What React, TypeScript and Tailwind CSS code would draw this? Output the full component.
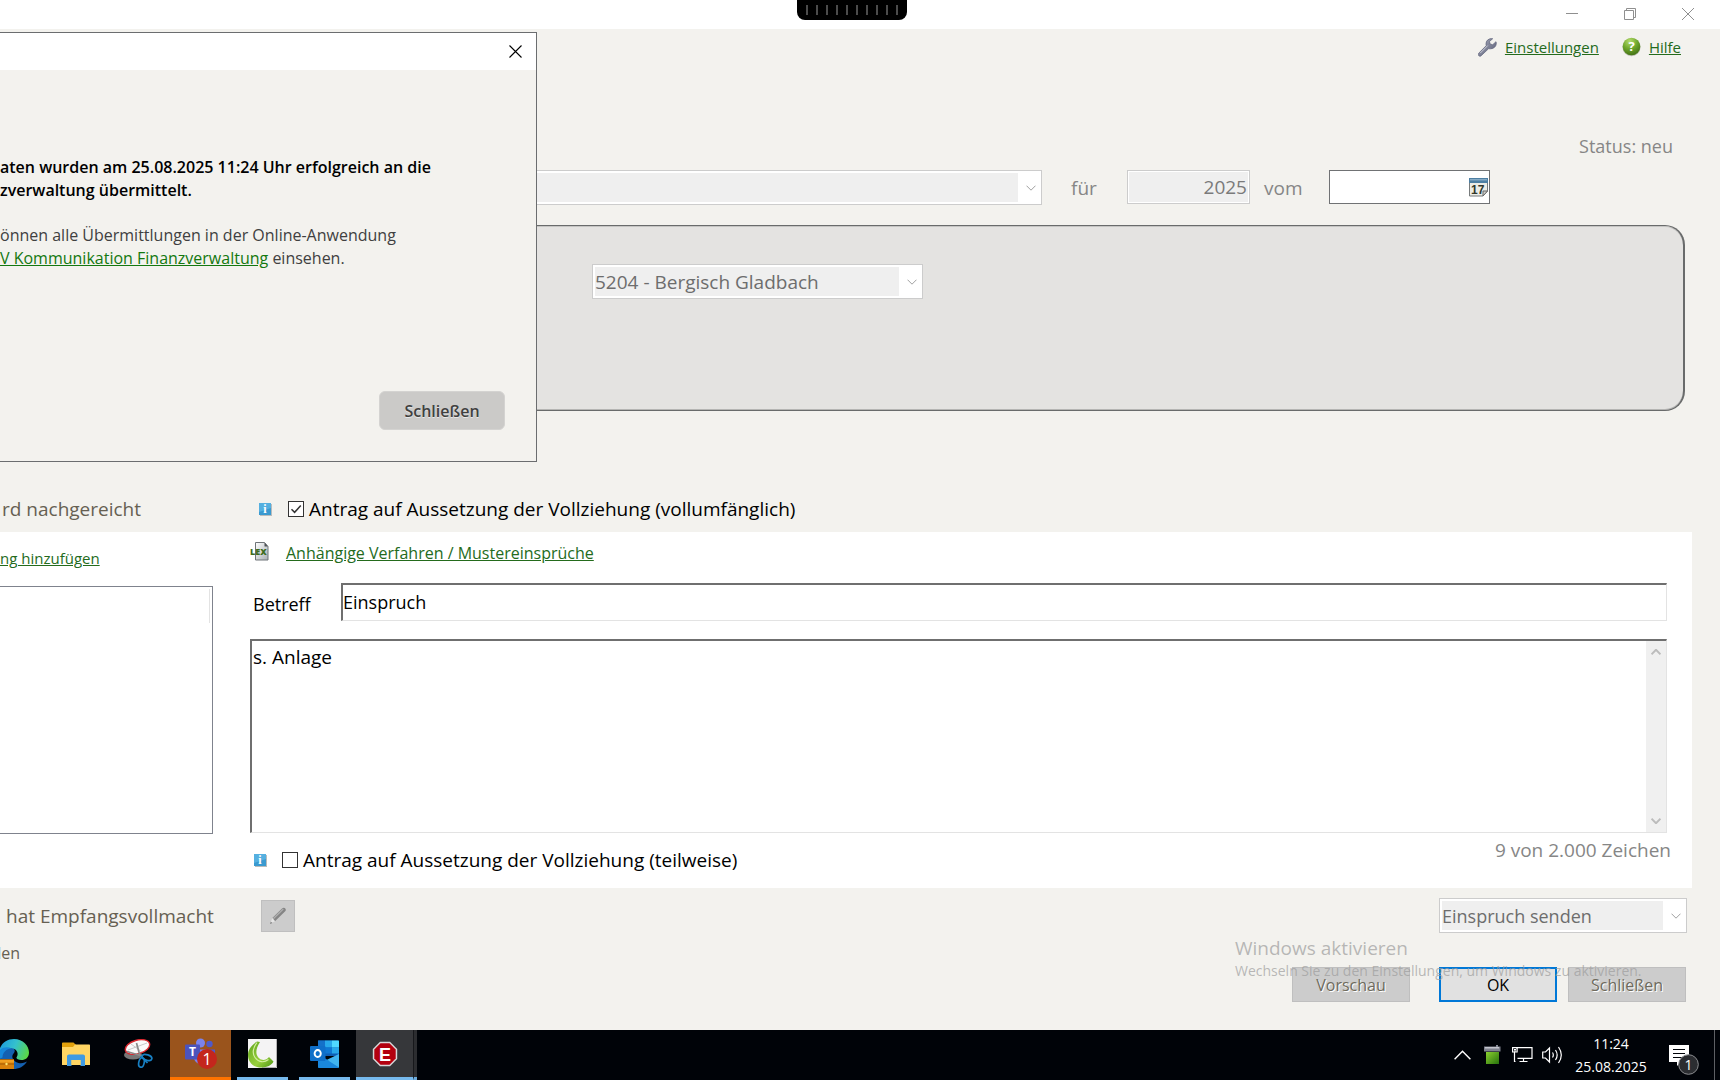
import { useState } from 'react';
import type { ReactNode } from 'react';

const Chevron = ({ className = '', up = false, width = 1 }: { className?: string; up?: boolean; width?: number }) => (
  <svg viewBox="0 0 10 6" className={`w-[10px] h-[6px] shrink-0 ${className}`} fill="none" stroke="currentColor" strokeWidth={width}>
    <path d={up ? 'M0.5 5.3 5 0.8 9.5 5.3' : 'M0.5 0.7 5 5.2 9.5 0.7'} />
  </svg>
);

const WrenchIcon = () => (
  <svg viewBox="0 0 19 19" className="w-[19px] h-[19px] shrink-0">
    <defs>
      <linearGradient id="wrench" x1="0" y1="0" x2="1" y2="1">
        <stop offset="0" stopColor="#a9adbd" />
        <stop offset="1" stopColor="#565a72" />
      </linearGradient>
    </defs>
    <path
      d="M13.500.6c-3 0-5.600 2.100-5.500 5.300 0 .7.1 1.200.300 1.700L.7 15.200c-.5.6-.6 1.900.200 2.600.7.7 1.700.5 2.300-.1l7.500-7.100c.6.200 1.300.3 2 .2 3.300-.1 5.700-2.500 5.600-5.800l-.3-1.300-3.300 3-2.600-.7-.6-2.500 3.200-2.800z"
      fill="url(#wrench)"
      stroke="#5d617a"
      strokeWidth=".7"
    />
    <path d="M9.800 7.500 2.300 15" stroke="#c9ccd8" strokeWidth="1" fill="none" />
  </svg>
);

const HelpIcon = () => (
  <svg viewBox="0 0 19 20" className="w-[19px] h-[20px] shrink-0">
    <defs>
      <radialGradient id="help" cx=".4" cy=".2" r=".85">
        <stop offset="0" stopColor="#b5dc6d" />
        <stop offset=".5" stopColor="#70a82c" />
        <stop offset="1" stopColor="#3f6d12" />
      </radialGradient>
    </defs>
    <circle cx="9.500" cy="10.200" r="9" fill="#8f9a83" opacity=".6" />
    <circle cx="9.500" cy="9.500" r="8.800" fill="url(#help)" />
    <text x="9.500" y="14.200" textAnchor="middle" fontSize="13" fontWeight="700" fill="#fff" fontFamily="Open Sans, sans-serif">?</text>
  </svg>
);

const CalendarIcon = () => (
  <svg viewBox="0 0 19 19" className="w-[19px] h-[19px]">
    <path d="M.5.5h18v12.500l-4.500 5H.5z" fill="#ecece6" stroke="#777b7c" />
    <path d="M0 0h19v5H0z" fill="#4d7fa3" />
    <path d="M1 1h17v1.500H1z" fill="#86abc5" />
    <path d="M18.500 13h-4.500v5z" fill="#cfcfcb" stroke="#666" />
    <text x="8.800" y="15.500" textAnchor="middle" fontSize="12" fontWeight="700" fill="#33382c" fontFamily="Liberation Sans, sans-serif">17</text>
  </svg>
);

const InfoIcon = () => (
  <svg viewBox="0 0 13 13" className="w-[13px] h-[13px] shrink-0">
    <path d="M1 1h12v12H1z" fill="#b9bcbc" />
    <path d="M0 0h12v12H0z" fill="#3a9ad0" />
    <path d="M0 0h12v5L0 9z" fill="#55b0e0" />
    <text x="6" y="10" textAnchor="middle" fontSize="12" fontWeight="700" fill="#fff" fontFamily="Liberation Serif, serif">i</text>
  </svg>
);

const LexIcon = () => (
  <svg viewBox="0 0 19 19" className="w-[19px] h-[19px] shrink-0">
    <defs>
      <linearGradient id="sheet" x1="0" y1="0" x2="1" y2="1">
        <stop offset="0" stopColor="#fff" />
        <stop offset="1" stopColor="#a9afb4" />
      </linearGradient>
    </defs>
    <path d="M5.500.5h9l3.500 4v13.500H5.500z" fill="url(#sheet)" stroke="#6f7478" />
    <path d="M14.500.5v4h3.500z" fill="#4f5357" />
    <text x="0" y="12.800" fontSize="9" fontWeight="800" fill="#3d6b1d" fontFamily="Open Sans, sans-serif">LEX</text>
  </svg>
);

const PencilIcon = () => (
  <svg viewBox="0 0 18 18" className="w-[18px] h-[18px]">
    <path d="M3.300 11 13.300 1.300c1-.9 2.300-.7 3 .1.700.8.700 2-.1 2.900L6 14.300z" fill="#858585" />
    <path d="M4.300 11.800 14.300 2" stroke="#b0b0b0" strokeWidth="1.200" />
    <path d="M3.300 11 6 14.300 1.500 16.300z" fill="#e6e6e6" />
    <path d="M1 17l.8-2.300 1.500 1.400z" fill="#777" />
  </svg>
);

const EdgeIcon = () => (
  <svg viewBox="0 0 30 30" className="w-[30px] h-[30px] -ml-px">
    <defs>
      <linearGradient id="edgeTop" x1="0" y1=".3" x2="1" y2=".6">
        <stop offset="0" stopColor="#1c9de0" />
        <stop offset=".5" stopColor="#35c1cc" />
        <stop offset="1" stopColor="#5ad845" />
      </linearGradient>
    </defs>
    <path d="M0 19C0 9 6 6 12 8c5 1.500 4 5 2.500 6.500-3 3.500 0 8 5 9.500 4 1 7-.8 8.500-1.500C25 27.500 20 30 14 30 6 30 0 26 0 19z" fill="#1460b0" />
    <path d="M0 12C2 4 8 0 15 0c9 0 15 6.500 15 13.500 0 5-3.500 7.500-7.500 7.500-3.500 0-5.500-1.300-5-2.500 2.500-3.500 1-9-6-9.500C7 8.700 3 10 0 14z" fill="url(#edgeTop)" />
    <path d="M0 12c3-4 9-4.500 12.500-2.500-5 0-9 4-9 9L0 20z" fill="#1687da" />
    <path d="M0 20h15v10H0z" fill="#d9820c" />
    <path d="M0 20h15v3.500H0z" fill="#f0a021" />
    <path d="M0 20.500h15M0 25h15" stroke="#8a4c05" strokeWidth=".7" />
    <circle cx="7.500" cy="25" r="1.200" fill="#ffe36b" />
  </svg>
);

const FolderIcon = () => (
  <svg viewBox="0 0 28 24" className="w-[28px] h-[24px]">
    <path d="M0 1.500C0 .7.500.5 1 .5h10.500L14 3v5H0z" fill="#e2a10c" />
    <path d="M0 5h11l2-2.500h14c.6 0 1 .4 1 1V23H0z" fill="#ffd563" />
    <path d="M5 24v-9.500c0-1.300.8-2 2-2h14c1.200 0 2 .7 2 2V24h-4.500v-6h-9v6z" fill="#3f9ae2" />
    <path d="M9.500 18h9v5h-9z" fill="#ffd563" />
  </svg>
);

const SnipIcon = () => (
  <svg viewBox="0 0 29 29" className="w-[29px] h-[29px]" fill="none">
    <ellipse cx="9" cy="16" rx="9" ry="4.500" fill="#777" />
    <ellipse cx="13.500" cy="8" rx="12.500" ry="6.800" transform="rotate(-16 13.500 8)" fill="#fafafa" stroke="#d9282f" strokeWidth="1.400" />
    <path d="M4 11l19-7M7 5l11 8" stroke="#c9c9c9" />
    <path d="M12.500 4 16 17M3 12.500 18 17" stroke="#8b8b8b" strokeWidth="1.700" />
    <ellipse cx="23" cy="18.500" rx="5" ry="2.700" transform="rotate(18 23 18.500)" stroke="#1780c4" strokeWidth="1.700" />
    <ellipse cx="17.500" cy="23.500" rx="2.700" ry="4.800" transform="rotate(12 17.500 23.500)" stroke="#1780c4" strokeWidth="1.700" />
    <path d="M16.500 17l7 7" stroke="#1780c4" strokeWidth="1.700" />
  </svg>
);

const TeamsIcon = () => (
  <svg viewBox="0 0 32 32" className="w-[32px] h-[32px]">
    <circle cx="24.500" cy="6" r="3.200" fill="#5059c9" />
    <path d="M19 11.500h11v8a5 5 0 0 1-8 3z" fill="#5059c9" />
    <circle cx="15.500" cy="5" r="4.500" fill="#7b83eb" />
    <path d="M9 11.500h13v8c0 4-3 6.500-6.500 6.500S9 23 9 19.500z" fill="#7b83eb" />
    <rect x="0" y="6.500" width="15" height="15" rx="1" fill="#4b53bc" />
    <text x="7.500" y="18" textAnchor="middle" fontSize="12" fontWeight="700" fill="#fff" fontFamily="Open Sans, sans-serif">T</text>
    <circle cx="22" cy="21" r="10" fill="#c4261d" />
    <text x="22" y="26.500" textAnchor="middle" fontSize="16" fill="#fff" fontFamily="Open Sans, sans-serif">1</text>
  </svg>
);

const LexwareIcon = () => (
  <svg viewBox="0 0 29 29" className="w-[29px] h-[29px]">
    <defs>
      <linearGradient id="lexware" x1="0" y1="0" x2="1" y2="1">
        <stop offset="0" stopColor="#5ea51c" />
        <stop offset=".6" stopColor="#98cf3d" />
        <stop offset="1" stopColor="#4c9412" />
      </linearGradient>
    </defs>
    <path d="M0 0h29v29H0z" fill="#f4f3f4" />
    <path d="M28.500 0v28.500H14" stroke="#b4b2b4" fill="none" />
    <path d="M9 2.500C3 6.500 0 11 0 16c0 8 6.500 13 14 12.500 5-.3 9.500-2 11.500-6l-4.500-4.500c-2.500 3-6.500 4-9.500 1.500C7 16 7.500 10 12 3z" fill="url(#lexware)" />
    <path d="M9 3.500c-4 5-5 11-2 15 3.500 5 9 5.500 13.500 2" fill="none" stroke="#d4efa0" strokeWidth="1.200" />
  </svg>
);

const OutlookIcon = () => (
  <svg viewBox="0 0 29 28" className="w-[29px] h-[28px]">
    <path d="M8 1.500C8 .8 8.500.5 9 .5h19c.6 0 1 .3 1 1V16H8z" fill="#0f5fb5" />
    <path d="M8 .5h7v7H8zM8 7.500h7v6H8z" fill="#1471c9" />
    <path d="M15 .5h7v7h-7z" fill="#28a8ea" />
    <path d="M22 .5h6c.6 0 1 .4 1 1v6h-7z" fill="#50d9ff" />
    <path d="M15 7.500h7v6h-7z" fill="#0f78d4" />
    <path d="M22 7.500h7v6h-7z" fill="#28a8ea" />
    <path d="M29 14v13c0 .6-.4 1-1 1H9c-.6 0-1-.4-1-1V14l10.500 6.500z" fill="#1a87dc" />
    <path d="M29 14v13.500L17 19.800z" fill="#41b4ef" />
    <rect x="0" y="6" width="15.500" height="15" rx="1" fill="#0f6fc9" />
    <ellipse cx="7.700" cy="13.500" rx="3.100" ry="3.500" fill="none" stroke="#fff" strokeWidth="1.900" />
  </svg>
);

const StopIcon = () => (
  <svg viewBox="0 0 26 26" className="w-[26px] h-[26px]">
    <path d="M8 .8h10L25.200 8v10L18 25.200H8L.8 18V8z" fill="#d8d8da" />
    <path d="M8.500 2.300h9l6.200 6.200v9l-6.200 6.200h-9l-6.200-6.200v-9z" fill="#b3000f" />
    <text x="13" y="19.500" textAnchor="middle" fontSize="18" fontWeight="700" fill="#fff" fontFamily="Liberation Sans, sans-serif">E</text>
  </svg>
);

const BatteryIcon = () => (
  <svg viewBox="0 0 17 20" className="w-[17px] h-[20px]">
    <defs>
      <linearGradient id="battery" x1="0" y1="0" x2="1" y2="1">
        <stop offset="0" stopColor="#8ad02f" />
        <stop offset="1" stopColor="#27720c" />
      </linearGradient>
    </defs>
    <path d="M12 0h2v2h-2z" fill="#8c8f9a" />
    <path d="M0 1.500h16.500v5H0z" fill="#7f828e" />
    <path d="M1 2h14v1.500H1z" fill="#c3c5cd" />
    <path d="M2 7h13v12H2z" fill="url(#battery)" />
  </svg>
);

const NetworkIcon = () => (
  <svg viewBox="0 0 21 18" className="w-[21px] h-[18px]" fill="none" stroke="#fff" strokeWidth="1.200">
    <path d="M5 2.500V1.600h15v10.800H5.500M7.500 15.500h8M11.500 12.500v3M2.500 6v9.500h1" />
    <path d="M.6 1.600h4.500V6H.6zM2 3.500h2M3 3.500v2" />
  </svg>
);

const SpeakerIcon = () => (
  <svg viewBox="0 0 21 20" className="w-[21px] h-[20px]" fill="none" stroke="#fff" strokeWidth="1.200">
    <path d="M.7 7h2.800L7.500 3v14L3.500 13H.7z" />
    <path d="M10.500 7.500c1 1.500 1 3.500 0 5M13.500 5c2 3 2 7 0 10M16.500 2c3.500 5 3.500 11 0 16" />
  </svg>
);

const MessageIcon = () => (
  <svg viewBox="0 0 32 32" className="w-[32px] h-[32px]">
    <path d="M0 2h20v17h-8l-4 4v-4H0z" fill="#fff" />
    <path d="M4 6.500h12M4 10.500h12M4 14.500h12" stroke="#000308" />
    <circle cx="19.500" cy="21.500" r="9.800" fill="#2b2d31" stroke="#8b8d90" />
    <text x="19.500" y="26.500" textAnchor="middle" fontSize="14" fill="#fff" fontFamily="Open Sans, sans-serif">1</text>
  </svg>
);

interface ComboProps {
  label: string;
  value?: string;
  className?: string;
}

const Combo = ({ label, value = '', className = '' }: ComboProps) => (
  <div className={`flex h-[35px] border border-[#cccccc] bg-white p-[2px] ${className}`}>
    <select
      aria-label={label}
      disabled
      className="min-w-0 flex-1 appearance-none bg-[#efefef] text-[#6d6d6d] opacity-100"
    >
      <option>{value}</option>
    </select>
    <span className="w-[21px] flex items-center justify-center pl-1 text-[#a0a0a0]">
      <Chevron />
    </span>
  </div>
);

interface CheckProps {
  label: string;
  checked: boolean;
  onChange: () => void;
}

const Check = ({ label, checked, onChange }: CheckProps) => (
  <label className="flex items-center gap-[5px] text-black">
    <span className="relative w-4 h-4">
      <input
        type="checkbox"
        checked={checked}
        onChange={onChange}
        className="block w-4 h-4 appearance-none border border-[#333333] bg-white"
      />
      {checked && (
        <svg viewBox="0 0 16 16" className="absolute inset-0 pointer-events-none" fill="none" stroke="#333" strokeWidth="1.500">
          <path d="M3.500 8.200 6.600 11.300 12.800 4.600" />
        </svg>
      )}
    </span>
    {label}
  </label>
);

const ResultDialog = ({ onClose }: { onClose: () => void }) => (
  <div role="dialog" aria-label="Übermittlung" className="absolute left-0 top-8 w-[537px] border border-l-0 border-[#6b6d6f] bg-[#f3f2ee] text-base/[23px]">
    <div className="h-[37px] bg-white flex items-center justify-end pr-[14px]">
      <button aria-label="Dialog schließen" onClick={onClose}>
        <svg viewBox="0 0 13 13" className="w-[13px] h-[13px]" stroke="#000" strokeWidth="1.100">
          <path d="M.5.5l12 12M12.500.5l-12 12" />
        </svg>
      </button>
    </div>
    <div className="pt-[86px] pr-[31px] pb-[31px]">
      <p className="font-semibold text-black">
        aten wurden am 25.08.2025 11:24 Uhr erfolgreich an die
        <br />
        zverwaltung übermittelt.
      </p>
      <p className="mt-[22px] text-[#404040]">
        önnen alle Übermittlungen in der Online-Anwendung
        <br />
        <a href="#kommunikation" className="text-[#13780f] underline">V Kommunikation Finanzverwaltung</a> einsehen.
      </p>
      <div className="mt-[121px] flex justify-end">
        <button
          onClick={onClose}
          className="w-[126px] h-[39px] rounded-md border border-[#d4d3d1] bg-[#cbcac8] pt-[2px] font-semibold text-[#404040] [text-shadow:0_1px_0_#e8e8e8]"
        >
          Schließen
        </button>
      </div>
    </div>
  </div>
);

const TaskButton = ({ label, className = '', bar = '', children }: { label: string; className?: string; bar?: string; children: ReactNode }) => (
  <button aria-label={label} className={`flex h-full flex-col items-center ${className}`}>
    <span className="flex-1 flex items-center justify-center">{children}</span>
    <span className={`h-[3px] w-full ${bar}`} />
  </button>
);

const Taskbar = () => (
  <footer className="h-[50px] shrink-0 bg-[#000308] text-white flex items-stretch justify-between overflow-hidden">
    <nav className="flex items-stretch">
      <TaskButton label="Edge" className="w-[29px]"><EdgeIcon /></TaskButton>
      <TaskButton label="Explorer" className="w-[94px]"><FolderIcon /></TaskButton>
      <TaskButton label="Snipping Tool" className="w-[31px]"><SnipIcon /></TaskButton>
      <TaskButton label="Teams" className="ml-4 w-[61px] bg-[#9a541c]" bar="bg-[#ff7300]"><TeamsIcon /></TaskButton>
      <TaskButton label="Lexware" className="ml-[6px] w-[51px]" bar="bg-[#76b9ed]"><LexwareIcon /></TaskButton>
      <TaskButton label="Outlook" className="ml-[11px] w-[51px]" bar="bg-[#76b9ed]"><OutlookIcon /></TaskButton>
      <TaskButton label="Einspruch" className="ml-[6px] w-[57px] bg-[#36373a]" bar="bg-[#76b9ed]"><StopIcon /></TaskButton>
      <span className="w-1 border-l border-[#17181b] border-b-[3px] border-b-[#6ba8d8] bg-[#2c2d30]" />
    </nav>
    <div className="flex items-center">
      <button aria-label="Ausgeblendete Symbole">
        <svg viewBox="0 0 17 10" className="w-[17px] h-[10px]" fill="none" stroke="#fff" strokeWidth="1.400">
          <path d="M.6 9.200 8.500 1.200 16.400 9.200" />
        </svg>
      </button>
      <span className="ml-[13px]"><BatteryIcon /></span>
      <span className="ml-[11px]"><NetworkIcon /></span>
      <span className="ml-[9px]"><SpeakerIcon /></span>
      <div className="ml-[11px] w-[74px] text-center text-sm/[23px] whitespace-nowrap">
        <div>11:24</div>
        <div>25.08.2025</div>
      </div>
      <button aria-label="Benachrichtigungen" className="ml-[21px] w-[45px] pt-2"><MessageIcon /></button>
      <span className="h-full w-[6px] border-l border-[#5d5f63]" />
    </div>
  </footer>
);

const App = () => {
  const [dialogOpen, setDialogOpen] = useState(true);
  const [full, setFull] = useState(true);
  const [partial, setPartial] = useState(false);
  const [subject, setSubject] = useState('Einspruch');
  const [text, setText] = useState('s. Anlage');

  return (
    <div className="relative min-h-screen flex flex-col overflow-hidden bg-[#f3f2ee] font-['Open_Sans',sans-serif] text-[19px]/7 text-[#868686]">
      <header className="relative h-[29px] shrink-0 bg-white flex items-center justify-end gap-[46px] pr-[26px] pb-px text-[#8f8f8f]">
        <div className="absolute left-1/2 top-0 -ml-[63px] w-[110px] h-5 rounded-b-lg bg-black flex items-center justify-center gap-2">
          {Array.from({ length: 10 }, (_, i) => (
            <span key={i} className="w-[2px] h-[10px] bg-[#4c4c4c]" />
          ))}
        </div>
        <button aria-label="Minimieren">
          <svg viewBox="0 0 12 12" className="w-[12px] h-[12px]" stroke="currentColor"><path d="M0 5.500h12" /></svg>
        </button>
        <button aria-label="Wiederherstellen">
          <svg viewBox="0 0 12 12" className="w-[12px] h-[12px]" fill="none" stroke="currentColor">
            <path d="M.5 2.500h9v9h-9zM2.500 2.500v-2h9v9h-2" />
          </svg>
        </button>
        <button aria-label="Fenster schließen">
          <svg viewBox="0 0 12 12" className="w-[12px] h-[12px]" stroke="currentColor"><path d="M0 0l12 12M12 0 0 12" /></svg>
        </button>
      </header>

      <div className="mt-[2px] h-8 flex items-center justify-end pr-[39px] text-[15px]">
        <WrenchIcon />
        <a href="#einstellungen" className="ml-2 text-[#246b1c] underline">Einstellungen</a>
        <span className="ml-[23px]"><HelpIcon /></span>
        <a href="#hilfe" className="ml-2 text-[#246b1c] underline">Hilfe</a>
      </div>

      <div className="mt-[69px] pr-[47px] text-right text-lg/7">Status: neu</div>

      <div className="mt-[10px] flex items-start pr-[230px] leading-[36px]">
        <Combo label="Bescheid" className="min-w-0 flex-1" />
        <label htmlFor="year" className="w-[85px] h-[35px] pl-[29px]">für</label>
        <input
          id="year"
          disabled
          defaultValue="2025"
          className="w-[123px] h-[34px] border border-[#cccccc] bg-[#efefef] pr-[2px] text-right text-[#7a7a7a] ring-1 ring-inset ring-white"
        />
        <label htmlFor="date" className="w-[79px] h-[35px] pl-[14px]">vom</label>
        <div className="w-[161px] h-[34px] flex items-center border border-[#707274] bg-white pr-px">
          <input id="date" className="min-w-0 flex-1 h-full px-1 outline-none" />
          <button aria-label="Kalender" className="h-[19px]"><CalendarIcon /></button>
        </div>
      </div>

      <section className="mt-5 mr-[35px] h-[186px] rounded-r-[20px] border border-l-0 border-r-2 border-[#696b6b] bg-[#e4e3e1] pl-[592px] pt-[38px] shadow-[inset_0_-1px_0_#b5b5b3,inset_0_1px_0_#c5c5c3]">
        <Combo label="Finanzamt" value="5204 - Bergisch Gladbach" className="w-[331px]" />
      </section>

      <div className="mt-[84px] flex items-center">
        <div className="w-[259px] pl-[2px] text-[#666052]">rd nachgereicht</div>
        <InfoIcon />
        <div className="ml-4">
          <Check label="Antrag auf Aussetzung der Vollziehung (vollumfänglich)" checked={full} onChange={() => setFull(!full)} />
        </div>
      </div>

      <main className="mt-[9px] mr-7 flex gap-[37px] bg-white pr-[21px]">
        <div className="w-[213px] shrink-0 pt-3">
          <a href="#anlage" className="block text-[15px]/7 text-[#246b1c] underline">ng hinzufügen</a>
          <div className="mt-[14px] h-[248px] border border-l-0 border-[#7f838d] pt-[2px] pr-[2px]">
            <div className="h-[34px] border-r border-[#e3e3e3]" />
          </div>
        </div>

        <div className="min-w-0 flex-1 pt-[7px]">
          <div className="flex items-start gap-[17px] text-base/7">
            <span className="pt-[3px]"><LexIcon /></span>
            <a href="#verfahren" className="text-[#246b1c] underline">Anhängige Verfahren / Mustereinsprüche</a>
          </div>

          <div className="mt-4 mr-1 flex items-center text-lg/7 text-black">
            <label htmlFor="subject" className="w-[91px] pl-[3px] pt-1">Betreff</label>
            <input
              id="subject"
              value={subject}
              onChange={(e) => setSubject(e.target.value)}
              className="min-w-0 flex-1 h-[38px] border border-t-2 border-l-2 border-[#e3e3e3] border-t-[#6f6f6f] border-l-[#6f6f6f] pb-[2px] outline-none"
            />
          </div>

          <div className="mt-[18px] mr-1 h-[194px] flex border border-t-2 border-l-2 border-[#e3e3e3] border-t-[#6f6f6f] border-l-[#6f6f6f]">
            <textarea
              aria-label="Begründung"
              value={text}
              onChange={(e) => setText(e.target.value)}
              className="min-w-0 flex-1 resize-none pl-px pt-[2px] text-black outline-none"
            />
            <div className="w-5 bg-[#f0f0f0] py-2 flex flex-col items-center justify-between text-[#bcbcbc]">
              <Chevron up width={2} />
              <Chevron width={2} />
            </div>
          </div>

          <div className="flex justify-between pt-[3px] pb-[14px]">
            <div className="mt-[10px] ml-1 flex items-center text-black">
              <InfoIcon />
              <div className="ml-[15px]">
                <Check label="Antrag auf Aussetzung der Vollziehung (teilweise)" checked={partial} onChange={() => setPartial(!partial)} />
              </div>
            </div>
            <div>{text.length} von 2.000 Zeichen</div>
          </div>
        </div>
      </main>

      <div className="relative flex-1 pt-[10px] pr-[33px] pb-7">
        <div className="flex items-center">
          <div className="w-[261px] pl-[6px] text-[#666052]">hat Empfangsvollmacht</div>
          <button aria-label="Bearbeiten" className="w-[34px] h-[32px] border border-[#bfbfbf] bg-[#cccccc] flex items-center justify-center">
            <PencilIcon />
          </button>
          <Combo label="Aktion" value="Einspruch senden" className="ml-auto w-[248px] text-lg/7" />
        </div>

        <div className="mt-1 mr-px flex justify-between text-base">
          <div className="w-5 h-8 pt-1 flex justify-end overflow-hidden text-[#666052]">den</div>
          <div className="mt-[30px] flex">
            <button disabled className="w-[118px] h-[35px] border border-[#bfbfbf] bg-[#cccccc] text-[#6e6a5c] [text-shadow:1px_1px_0_#fff]">Vorschau</button>
            <button className="ml-[29px] w-[118px] h-[35px] border-2 border-[#0078d7] bg-[#e1e1e1] text-black">OK</button>
            <button disabled className="ml-[11px] w-[118px] h-[35px] border border-[#bfbfbf] bg-[#cccccc] text-[#6e6a5c] [text-shadow:1px_1px_0_#fff]">Schließen</button>
          </div>
        </div>

        <div className="absolute right-0 top-[46px] w-[485px] pointer-events-none text-[#9c9c9c]/70">
          <div>Windows aktivieren</div>
          <div className="text-sm/[18px]">Wechseln Sie zu den Einstellungen, um Windows zu aktivieren.</div>
        </div>
      </div>

      <Taskbar />

      {dialogOpen && <ResultDialog onClose={() => setDialogOpen(false)} />}
    </div>
  );
};

export default App;
